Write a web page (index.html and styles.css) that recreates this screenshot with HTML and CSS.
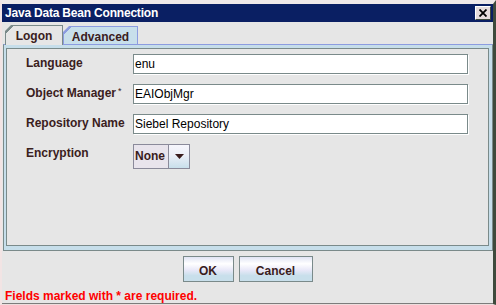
FILE: index.html
```html
<!DOCTYPE html>
<html>
<head>
<meta charset="utf-8">
<link rel="stylesheet" href="styles.css">
</head>
<body>
<div class="window">
  <div class="titlebar">
    <span class="title">Java Data Bean Connection</span>
    <span class="close"><svg width="8" height="8" viewBox="0 0 8 8"><path d="M0.5 0.5L7.5 7.5M7.5 0.5L0.5 7.5" stroke="#000" stroke-width="1.8" fill="none"/></svg></span>
  </div>
  <div class="main">
    <div class="tabs">
      <div class="tab sel">Logon</div>
      <div class="tab alt">Advanced</div>
    </div>
    <div class="panel">
      <div class="panel-inner">
        <div class="form">
          <div class="label">Language</div>
          <div class="field">enu</div>
          <div class="label">Object Manager<span class="req">*</span></div>
          <div class="field">EAIObjMgr</div>
          <div class="label">Repository Name</div>
          <div class="field">Siebel Repository</div>
          <div class="label">Encryption</div>
          <div class="combo">
            <span class="combo-value">None</span>
            <span class="combo-arrow"><svg width="9" height="5" viewBox="0 0 9 5"><path d="M0 0H9L4.5 5Z" fill="#3a1c1c"/></svg></span>
          </div>
        </div>
      </div>
    </div>
    <div class="buttons">
      <button class="btn ok">OK</button>
      <button class="btn cancel">Cancel</button>
    </div>
    <div class="note">Fields marked with * are required.</div>
  </div>
</div>
</body>
</html>
```
FILE: styles.css
```css
* { box-sizing: border-box; }
html, body { margin: 0; padding: 0; }
body {
  width: 496px;
  height: 305px;
  overflow: hidden;
  background: #e6e6e6;
  font-family: "Liberation Sans", Arial, sans-serif;
}
.window {
  width: 496px;
  height: 305px;
  display: flex;
  flex-direction: column;
  background: #e6e6e6;
  border-top: 4px solid #efe9e9;
  border-left: 2px solid #f2e4e4;
  border-right: 3px solid #3e4a3c;
  border-bottom: 1px solid #eedddd;
}
.titlebar {
  height: 18px;
  flex: none;
  background: #0a1f63;
  display: flex;
  align-items: center;
  justify-content: space-between;
  padding: 0 2px 0 3px;
  color: #fff;
  font-weight: bold;
  font-size: 12px;
}
.title { line-height: 14px; letter-spacing: -0.2px; }
.close {
  width: 16px;
  height: 14px;
  background: #e6dcdc;
  border: 1px solid;
  border-color: #fff #3e4a3c #3e4a3c #fff;
  display: flex;
  align-items: center;
  justify-content: center;
}
.close svg { display: block; }
.main {
  flex: 1;
  display: flex;
  flex-direction: column;
  box-shadow: inset 0 -1px #7c7c7c;
}
.tabs {
  height: 22px;
  flex: none;
  display: flex;
  align-items: flex-end;
  padding-left: 3px;
  position: relative;
  z-index: 1;
}
.tab {
  font-size: 12px;
  font-weight: bold;
  color: #3a2020;
  line-height: 14px;
  text-align: center;
  border: 1px solid;
  border-bottom: none;
  clip-path: polygon(6px 0, 100% 0, 100% 100%, 0 100%, 0 6px);
}
.tab.sel {
  width: 58px;
  height: 20px;
  margin-bottom: -1px;
  padding-top: 3px;
  border-color: #7a8a8a;
  background: linear-gradient(135deg, #7a8a8a 0 5.2px, #e6e6e6 5.2px);
}
.tab.alt {
  width: 75px;
  height: 18px;
  padding-top: 3px;
  border-color: #8c9ce0;
  background: linear-gradient(135deg, #8c9ce0 0 5.2px, #c8dfeb 5.2px);
}
.panel {
  height: 207px;
  flex: none;
  margin-left: 1px;
  border: 1px solid #7a8a8a;
  border-top-color: #8c9ce0;
  padding: 3px 3px 4px 2px;
  background: #c6deea;
  display: flex;
}
.panel-inner {
  flex: 1;
  border: 1px solid #7a8a8a;
  background: #e6e6e6;
  padding: 5px 20px 0 19px;
}
.form {
  display: grid;
  grid-template-columns: 107px 1fr;
  grid-template-rows: 20px 20px 20px 25px;
  row-gap: 10px;
  align-items: start;
}
.label {
  font-size: 12px;
  font-weight: bold;
  color: #3a2020;
  line-height: 14px;
  padding-top: 2px;
}
.req {
  font-size: 9px;
  font-weight: normal;
  vertical-align: top;
  margin-left: 2px;
  line-height: 10px;
}
.field {
  height: 20px;
  border: 1px solid #7a8a8a;
  background: #fff;
  box-shadow: 1px 1px 0 #fff;
  font-size: 12px;
  line-height: 18px;
  padding-left: 1px;
  color: #000;
}
.combo {
  width: 57px;
  height: 25px;
  border: 1px solid #8a8a9a;
  display: flex;
  background: #e8e4ec;
}
.combo-value {
  width: 35px;
  border-right: 1px solid #8a8a9a;
  font-size: 12px;
  font-weight: bold;
  color: #3a1c1c;
  line-height: 23px;
  padding-left: 1px;
}
.combo-arrow {
  flex: 1;
  display: flex;
  align-items: center;
  justify-content: center;
  background: linear-gradient(#f6f6fc 0%, #eef0f8 40%, #c8dfeb 100%);
}
.combo-arrow svg { display: block; }
.buttons {
  flex: none;
  display: flex;
  justify-content: center;
  gap: 5px;
  margin-top: 5px;
}
.btn {
  height: 26px;
  border: 1px solid #7a8a8a;
  background: linear-gradient(#e0e4f4 0%, #ffffff 28%, #e8e8f8 55%, #c8dfeb 78%, #c8dfeb 100%);
  font-family: "Liberation Sans", Arial, sans-serif;
  font-size: 12px;
  font-weight: bold;
  color: #3a1c1c;
  padding: 3px 0 0 0;
  line-height: 14px;
  margin: 0;
}
.btn.ok { width: 51px; }
.btn.cancel { width: 74px; }
.note {
  flex: none;
  margin-top: 7px;
  padding-left: 3px;
  font-size: 12px;
  font-weight: bold;
  color: #ff0000;
  line-height: 14px;
}
```
